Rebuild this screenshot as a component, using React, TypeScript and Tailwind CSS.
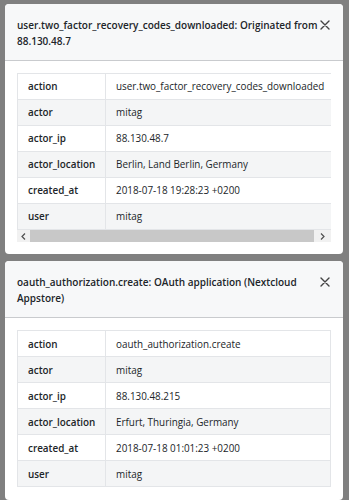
import React from 'react'

type Row = [string, string]

interface EventCardProps {
  title: string
  rows: Row[]
  scroll?: boolean
}

const font = { fontFamily: '"Open Sans", "Noto Sans", sans-serif' }

const CloseIcon = () => (
  <svg width="10" height="10" viewBox="0 0 10 10" className="text-[#444]">
    <path d="M1 1 L9 9 M9 1 L1 9" stroke="currentColor" strokeWidth="1.4" strokeLinecap="round" />
  </svg>
)

const Table = ({ rows, wide }: { rows: Row[]; wide?: boolean }) => (
  <table className={`border-collapse text-[9.9px] text-[#212529] ${wide ? 'w-[322px]' : 'w-full'}`}>
    <tbody>
      {rows.map(([k, v], i) => (
        <tr key={k} className={i % 2 === 1 ? 'bg-[#f4f5f6]' : 'bg-white'}>
          <td className="h-[26px] w-[88px] border border-[#e3e5e8] pl-[10px] pr-2 font-semibold whitespace-nowrap">{k}</td>
          <td className="h-[26px] border border-[#e3e5e8] pl-[10px] pr-2 whitespace-nowrap">{v}</td>
        </tr>
      ))}
    </tbody>
  </table>
)

const Scrollbar = () => (
  <div className="flex h-[12px] bg-[#f1f1f1]">
    <div className="flex w-[13px] items-center justify-center text-[#505050]">
      <svg width="5" height="7" viewBox="0 0 5 7">
        <path d="M4 0.5 L1 3.5 L4 6.5" fill="none" stroke="currentColor" strokeWidth="1.2" />
      </svg>
    </div>
    <div className="flex-1 bg-[#c8c8c8]" />
    <div className="flex w-[17px] items-center justify-center text-[#505050]">
      <svg width="5" height="7" viewBox="0 0 5 7">
        <path d="M1 0.5 L4 3.5 L1 6.5" fill="none" stroke="currentColor" strokeWidth="1.2" />
      </svg>
    </div>
  </div>
)

const EventCard = ({ title, rows, scroll }: EventCardProps) => (
  <div className="w-[338px] overflow-hidden rounded-[4px] bg-white">
    <div className="flex h-[57px] items-start gap-[2px] border-b border-[#c9cbce] bg-[#f7f8f9] pl-[12px] pr-[13px] pt-[13px]">
      <div className="flex-1 text-[10px] font-semibold leading-[16px] text-[#212529]">{title}</div>
      <div className="pt-[3px]">
        <CloseIcon />
      </div>
    </div>
    <div className="px-[12px] pt-[12px] pb-[13px]">
      {scroll ? (
        <div>
          <div className="overflow-hidden">
            <Table rows={rows} wide />
          </div>
          <Scrollbar />
        </div>
      ) : (
        <Table rows={rows} />
      )}
    </div>
  </div>
)

export default function App() {
  return (
    <div style={font} className="flex h-[500px] w-[349px] flex-col gap-[7px] overflow-hidden bg-[#808080] pl-[5px] pt-[4px]">
      <EventCard
        scroll
        title="user.two_factor_recovery_codes_downloaded: Originated from 88.130.48.7"
        rows={[
          ['action', 'user.two_factor_recovery_codes_downloaded'],
          ['actor', 'mitag'],
          ['actor_ip', '88.130.48.7'],
          ['actor_location', 'Berlin, Land Berlin, Germany'],
          ['created_at', '2018-07-18 19:28:23 +0200'],
          ['user', 'mitag'],
        ]}
      />
      <EventCard
        title="oauth_authorization.create: OAuth application (Nextcloud Appstore)"
        rows={[
          ['action', 'oauth_authorization.create'],
          ['actor', 'mitag'],
          ['actor_ip', '88.130.48.215'],
          ['actor_location', 'Erfurt, Thuringia, Germany'],
          ['created_at', '2018-07-18 01:01:23 +0200'],
          ['user', 'mitag'],
        ]}
      />
    </div>
  )
}
